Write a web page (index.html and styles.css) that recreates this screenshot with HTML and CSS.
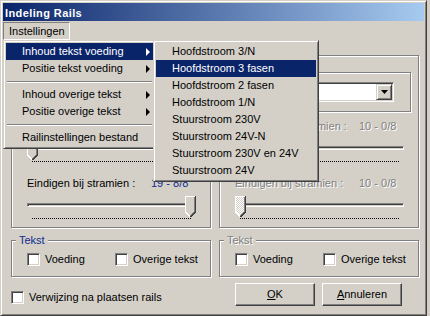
FILE: index.html
```html
<!DOCTYPE html>
<html lang="nl">
<head>
  <meta charset="UTF-8">
  <title>Indeling Rails</title>
  <link rel="stylesheet" href="styles.css">
</head>
<body>
  <svg class="svg-defs" width="0" height="0" aria-hidden="true">
    <defs>
      <pattern id="hatch" width="2" height="2" patternUnits="userSpaceOnUse">
        <rect width="2" height="2" fill="#d4d0c8"/>
        <rect width="1" height="1" fill="#fff"/>
        <rect x="1" y="1" width="1" height="1" fill="#fff"/>
      </pattern>
      <symbol id="thumb" viewBox="0 0 11 21">
        <path d="M0 0H11V16L5.5 21.5L0 16Z" fill="#d4d0c8"/>
        <path d="M0.5 16V0.5H10M0.5 16L5 20.5" fill="none" stroke="#fff"/>
        <path d="M9.5 1V15.8L5.5 19.8" fill="none" stroke="#808080"/>
        <path d="M10.5 0V16L5.5 21" fill="none" stroke="#404040"/>
      </symbol>
      <symbol id="thumb-off" viewBox="0 0 11 21">
        <path d="M0 0H11V16L5.5 21.5L0 16Z" fill="url(#hatch)"/>
        <path d="M0.5 16V0.5H10M0.5 16L5 20.5" fill="none" stroke="#fff"/>
        <path d="M9.5 1V15.8L5.5 19.8" fill="none" stroke="#808080"/>
        <path d="M10.5 0V16L5.5 21" fill="none" stroke="#404040"/>
      </symbol>
    </defs>
  </svg>

  <div class="window">
    <div class="title-bar">Indeling Rails</div>
    <div class="menu-bar">
      <span class="menu-title open">Instellingen</span>
    </div>

    <div class="dialog">
      <div class="columns">
        <div class="group">
          <div class="frame">
            <div class="combo">
              <span class="combo-text"></span>
              <span class="combo-btn"><svg width="7" height="4" viewBox="0 0 7 4"><path d="M0 0H7L3.5 4Z" fill="#000"/></svg></span>
            </div>
          </div>
          <div class="field"><span class="field-label">Beginnen bij stramien :</span><span class="field-value">1 - 0/8</span></div>
          <div class="slider">
            <div class="track"></div>
            <div class="ticks"></div>
            <svg class="thumb" width="11" height="21" style="left: 0"><use href="#thumb"/></svg>
          </div>
          <div class="field second"><span class="field-label">Eindigen bij stramien :</span><span class="field-value">19 - 8/8</span></div>
          <div class="slider">
            <div class="track"></div>
            <div class="ticks"></div>
            <svg class="thumb" width="11" height="21" style="left: 158px"><use href="#thumb"/></svg>
          </div>
        </div>

        <div class="group disabled">
          <div class="frame">
            <div class="combo">
              <span class="combo-text"></span>
              <span class="combo-btn"><svg width="7" height="4" viewBox="0 0 7 4"><path d="M0 0H7L3.5 4Z" fill="#000"/></svg></span>
            </div>
          </div>
          <div class="field"><span class="field-label">Beginnen bij stramien :</span><span class="field-value">10 - 0/8</span></div>
          <div class="slider">
            <div class="track"></div>
            <div class="ticks"></div>
            <svg class="thumb" width="11" height="21" style="left: 0"><use href="#thumb-off"/></svg>
          </div>
          <div class="field second"><span class="field-label">Eindigen bij stramien :</span><span class="field-value">10 - 0/8</span></div>
          <div class="slider">
            <div class="track"></div>
            <div class="ticks"></div>
            <svg class="thumb" width="11" height="21" style="left: 0"><use href="#thumb-off"/></svg>
          </div>
        </div>
      </div>

      <div class="columns text-row">
        <div class="group small">
          <span class="legend">Tekst</span>
          <div class="checks">
            <label class="check wide"><span class="box"></span>Voeding</label>
            <label class="check"><span class="box"></span>Overige tekst</label>
          </div>
        </div>
        <div class="group small disabled">
          <span class="legend">Tekst</span>
          <div class="checks">
            <label class="check wide"><span class="box"></span>Voeding</label>
            <label class="check"><span class="box"></span>Overige tekst</label>
          </div>
        </div>
      </div>

      <div class="columns bottom-row">
        <label class="check ref-check"><span class="box"></span>Verwijzing na plaatsen rails</label>
        <div class="buttons">
          <button class="btn"><u>O</u>K</button>
          <button class="btn"><u>A</u>nnuleren</button>
        </div>
      </div>
    </div>

    <div class="menu main-menu">
      <div class="menu-item active">Inhoud tekst voeding<span class="arrow"></span></div>
      <div class="menu-item">Positie tekst voeding<span class="arrow"></span></div>
      <div class="menu-sep"></div>
      <div class="menu-item">Inhoud overige tekst<span class="arrow"></span></div>
      <div class="menu-item">Positie overige tekst<span class="arrow"></span></div>
      <div class="menu-sep"></div>
      <div class="menu-item">Railinstellingen bestand</div>
    </div>

    <div class="menu sub-menu">
      <div class="menu-item">Hoofdstroom 3/N</div>
      <div class="menu-item active">Hoofdstroom 3 fasen</div>
      <div class="menu-item">Hoofdstroom 2 fasen</div>
      <div class="menu-item">Hoofdstroom 1/N</div>
      <div class="menu-item">Stuurstroom 230V</div>
      <div class="menu-item">Stuurstroom 24V-N</div>
      <div class="menu-item">Stuurstroom 230V en 24V</div>
      <div class="menu-item">Stuurstroom 24V</div>
    </div>
  </div>
</body>
</html>
```

FILE: styles.css
```css
* { margin: 0; padding: 0; box-sizing: border-box; }
body {
  font-family: "Liberation Sans", Arial, sans-serif;
  font-size: 11px;
  color: #000;
  background: #d4d0c8;
}
.svg-defs {
  position: absolute;
  width: 0;
  height: 0;
}
.window {
  position: relative;
  width: 427px;
  height: 316px;
  background: #d4d0c8;
  border: 1px solid;
  border-color: #d4d0c8 #404040 #404040 #d4d0c8;
  box-shadow: inset 1px 1px #fff, inset -1px -1px #808080;
  padding: 2px;
}
.title-bar {
  height: 18px;
  line-height: 20px;
  overflow: hidden;
  padding-left: 2px;
  color: #fff;
  font-weight: bold;
  letter-spacing: 0.4px;
  background: linear-gradient(to right, #0a246a, #a6caf0);
}
.menu-bar {
  height: 19px;
  padding-top: 1px;
}
.menu-title {
  display: inline-block;
  height: 18px;
  line-height: 16px;
  padding: 0 4px 0 5px;
  border: 1px solid transparent;
}
.menu-title.open {
  border-color: #808080 #fff #fff #808080;
}

/* dialog body */
.dialog {
  padding: 15px 5px 0 8px;
}
.columns {
  display: grid;
  grid-template-columns: 200px 200px;
  column-gap: 8px;
}
.group {
  position: relative;
  border: 1px solid #808080;
  box-shadow: 1px 1px #fff, inset 1px 1px #fff;
  padding: 16px 7px 8px;
}
.legend {
  position: absolute;
  top: -7px;
  left: 5px;
  line-height: 13px;
  padding: 0 3px;
  background: #d4d0c8;
  color: #102c8c;
}
.frame {
  height: 40px;
  border: 1px solid #808080;
  box-shadow: 1px 1px #fff, inset 1px 1px #fff;
  padding: 9px 7px;
}
.combo {
  display: flex;
  width: 159px;
  height: 20px;
  background: #fff;
  border: 1px solid;
  border-color: #808080 #fff #fff #808080;
  box-shadow: inset 1px 1px #404040, inset -1px -1px #d4d0c8;
  padding: 1px;
}
.combo-text { flex: 1; }
.combo-btn {
  display: flex;
  align-items: center;
  justify-content: center;
  width: 16px;
  height: 16px;
  background: #d4d0c8;
  border: 1px solid;
  border-color: #d4d0c8 #404040 #404040 #d4d0c8;
  box-shadow: inset 1px 1px #fff, inset -1px -1px #808080;
}
.combo-btn svg { display: block; }
.field {
  display: flex;
  height: 13px;
  line-height: 13px;
  margin-top: 8px;
  padding-left: 8px;
  white-space: nowrap;
}
.field.second { margin-top: 15px; }
.field-label { width: 124px; }
.field-value { color: #102c8c; }
.slider {
  position: relative;
  width: 169px;
  height: 23px;
  margin: 6px 0 0 8px;
}
.track {
  position: absolute;
  top: 7px;
  left: 0;
  right: 0;
  height: 4px;
  border: 1px solid;
  border-color: #808080 #fff #fff #808080;
  box-shadow: inset 1px 1px #404040;
}
.ticks {
  position: absolute;
  top: 22px;
  left: 5px;
  width: 159px;
  height: 1px;
  background: repeating-linear-gradient(90deg, #000 0 1px, transparent 1px 2px);
}
.thumb {
  position: absolute;
  top: 0;
  display: block;
  shape-rendering: crispEdges;
}
.disabled .field,
.disabled .field-value,
.disabled > .legend {
  color: #808080;
  text-shadow: 1px 1px #fff;
}

/* checkbox groups */
.text-row { margin-top: 12px; }
.group.small { padding: 12px 0 10px 15px; }
.group.small .legend { left: 4px; }
.checks { display: flex; }
.check {
  display: flex;
  align-items: flex-start;
  gap: 5px;
  line-height: 13px;
  white-space: nowrap;
}
.check.wide { width: 88px; }
.box {
  width: 13px;
  height: 13px;
  flex: none;
  background: #fff;
  border: 1px solid;
  border-color: #808080 #fff #fff #808080;
  box-shadow: inset 1px 1px #404040, inset -1px -1px #d4d0c8;
}
.bottom-row { margin-top: 6px; }
.ref-check { margin-top: 8px; }
.buttons {
  display: flex;
  gap: 7px;
  padding-left: 16px;
}
.btn {
  width: 80px;
  height: 23px;
  font: inherit;
  line-height: 21px;
  color: #000;
  background: #d4d0c8;
  border: 1px solid;
  border-color: #fff #404040 #404040 #fff;
  box-shadow: inset -1px -1px #808080;
}

/* open menus */
.menu {
  position: absolute;
  top: 39px;
  background: #d4d0c8;
  border: 1px solid;
  border-color: #d4d0c8 #404040 #404040 #d4d0c8;
  box-shadow: inset 1px 1px #fff, inset -1px -1px #808080;
  padding: 2px;
}
.main-menu { left: 2px; width: 153px; }
.sub-menu { left: 152px; width: 166px; }
.menu-item {
  position: relative;
  height: 17px;
  line-height: 17px;
  padding-left: 16px;
  white-space: nowrap;
}
.menu-item.active {
  background: #0a246a;
  color: #fff;
}
.arrow {
  position: absolute;
  top: 5px;
  right: 3px;
  width: 0;
  height: 0;
  border-left: 4px solid currentColor;
  border-top: 4px solid transparent;
  border-bottom: 4px solid transparent;
}
.menu-sep {
  height: 9px;
  padding-top: 4px;
}
.menu-sep::after {
  content: "";
  display: block;
  margin: 0 1px;
  border-top: 1px solid #808080;
  border-bottom: 1px solid #fff;
}
```
